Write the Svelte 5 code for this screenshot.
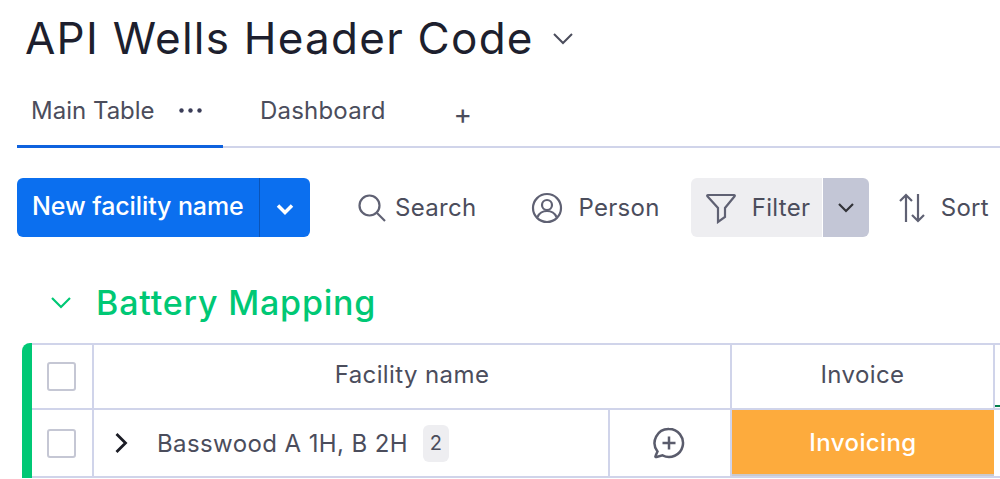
<script>
    const rows = [{ name: "Basswood A 1H, B 2H", count: 2, invoice: "Invoicing" }];
</script>

<main class="board">
    <header class="title-row">
        <h1>API Wells Header Code</h1>
        <svg class="title-caret" width="22" height="13" viewBox="0 0 22 13">
            <path d="M2 2l9 9 9-9" />
        </svg>
    </header>

    <nav class="tabs">
        <div class="tab active">
            <span>Main Table</span>
            <svg width="23" height="5" viewBox="0 0 23 5">
                <circle cx="2.500" cy="2.500" r="2.200" />
                <circle cx="11.500" cy="2.500" r="2.200" />
                <circle cx="20.500" cy="2.500" r="2.200" />
            </svg>
        </div>
        <div class="tab">Dashboard</div>
        <div class="tab-add">+</div>
    </nav>

    <section class="toolbar">
        <div class="new-btn">
            <span class="new-label">New facility name</span>
            <span class="new-caret">
                <svg width="20" height="12" viewBox="0 0 20 12">
                    <path d="M3 2.500l7 7 7-7" />
                </svg>
            </span>
        </div>

        <div class="tool search">
            <svg width="30" height="30" viewBox="0 0 30 30">
                <circle cx="12.500" cy="12.500" r="10" />
                <path d="M20 20l8 8" />
            </svg>
            <span>Search</span>
        </div>

        <div class="tool person">
            <svg width="32" height="32" viewBox="0 0 32 32">
                <circle cx="16" cy="16" r="14" />
                <circle cx="16" cy="13" r="5" />
                <path d="M6.500 25c2-4.500 5.500-6 9.500-6s7.500 1.500 9.500 6" />
            </svg>
            <span>Person</span>
        </div>

        <div class="filter">
            <div class="filter-main">
                <svg width="32" height="32" viewBox="0 0 32 32">
                    <path d="M3 3h26c.8 0 1 .8.6 1.300L20 16v9l-7 5V16L2.400 4.300C2 3.800 2.200 3 3 3z" />
                </svg>
                <span>Filter</span>
            </div>
            <div class="filter-caret">
                <svg width="18" height="11" viewBox="0 0 18 11">
                    <path d="M2 2l7 7 7-7" />
                </svg>
            </div>
        </div>

        <div class="tool sort">
            <svg width="28" height="32" viewBox="0 0 28 32">
                <path d="M8 30V3M2 9l6-6 6 6" />
                <path d="M20 2v27M14 23l6 6 6-6" />
            </svg>
            <span>Sort</span>
        </div>
    </section>

    <div class="group-title">
        <svg width="22" height="13" viewBox="0 0 22 13">
            <path d="M2 2l9 9 9-9" />
        </svg>
        <h2>Battery Mapping</h2>
    </div>

    <section class="table">
        <div class="row head">
            <div class="cell check"><span class="box"></span></div>
            <div class="cell name-head">Facility name</div>
            <div class="cell invoice-head">Invoice</div>
            <div class="cell rest"></div>
        </div>
        {#each rows as row}
            <div class="row body">
                <div class="cell check"><span class="box"></span></div>
                <div class="cell name">
                    <svg width="14" height="22" viewBox="0 0 14 22">
                        <path d="M2.500 2l9 9-9 9" />
                    </svg>
                    <span class="name-text">{row.name}</span>
                    <span class="count">{row.count}</span>
                </div>
                <div class="cell comment">
                    <svg width="32" height="32" viewBox="0 0 32 32">
                        <path d="M16 2a14 14 0 1 1-6.500 26.400L3.500 30c-.8.2-1.300-.4-1-1l2-4.500A14 14 0 0 1 16 2z" />
                        <path d="M16 9.500v13M9.500 16h13" />
                    </svg>
                </div>
                <div class="cell status">{row.invoice}</div>
                <div class="cell rest"></div>
            </div>
        {/each}
    </section>
</main>

<style>
    :global(body) {
        margin: 0;
        background: #fff;
        overflow: hidden;
    }

    .board {
        width: 1000px;
        height: 479px;
        overflow: hidden;
        box-sizing: border-box;
        font-family: "Inter", "Noto Sans", sans-serif;
        color: #4b4d5c;
    }

    svg {
        flex: none;
        display: block;
        fill: none;
        stroke: currentColor;
    }

    /* TITLE */
    .title-row {
        height: 76px;
        padding-left: 25px;
        display: flex;
        align-items: center;
        gap: 18px;
    }

    h1 {
        margin: 0;
        font-size: 44px;
        font-weight: 400;
        letter-spacing: 1.25px;
        color: #1d1f2e;
        white-space: nowrap;
    }

    .title-caret {
        stroke: #4b4d5c;
        stroke-width: 2;
    }

    /* TABS */
    .tabs {
        height: 72px;
        margin-left: 17px;
        box-sizing: border-box;
        border-bottom: 2px solid #d0d4ea;
        display: flex;
        font-size: 24px;
    }

    .tab {
        height: 72px;
        box-sizing: border-box;
        display: flex;
        align-items: center;
        padding: 0 0 4px 14px;
        gap: 24px;
    }

    .tab.active {
        width: 206px;
        padding-bottom: 0;
        border-bottom: 3px solid #0f62de;
    }

    .tab.active svg {
        fill: #3b3d58;
        stroke: none;
    }

    .tab:not(.active) {
        padding-left: 37px;
        letter-spacing: 0.2px;
    }

    .tab-add {
        margin-left: 68px;
        padding-top: 24px;
        font-size: 28px;
        line-height: 1;
    }

    /* TOOLBAR */
    .toolbar {
        margin: 30px 0 0 17px;
        height: 59px;
        display: flex;
        align-items: center;
        font-size: 24px;
        letter-spacing: 0.3px;
        white-space: nowrap;
    }

    .new-btn {
        width: 293px;
        height: 59px;
        display: flex;
        background: #0b6fef;
        border-radius: 6px;
        color: #fff;
        font-weight: 500;
        letter-spacing: 0;
    }

    .new-label {
        width: 243px;
        box-sizing: border-box;
        padding-left: 15px;
        display: flex;
        align-items: center;
        padding-bottom: 3px;
        border-right: 1px solid #0a54b8;
        font-size: 25px;
        letter-spacing: -0.1px;
    }

    .new-caret {
        flex: 1;
        display: flex;
        align-items: center;
        justify-content: center;
        padding-top: 3px;
    }

    .new-caret svg {
        stroke-width: 3.500;
    }

    .tool {
        display: flex;
        align-items: center;
    }

    .tool svg {
        stroke: #5f6173;
        stroke-width: 2.200;
    }

    .search {
        margin-left: 47px;
        gap: 8px;
    }

    .person {
        margin-left: 55px;
        gap: 15px;
    }

    .filter {
        margin-left: 31px;
        width: 178px;
        height: 59px;
        display: flex;
        border-radius: 6px;
        overflow: hidden;
    }

    .filter-main {
        width: 131px;
        background: #eeeef1;
        display: flex;
        align-items: center;
        gap: 15px;
        padding-left: 14px;
        box-sizing: border-box;
    }

    .filter-main svg {
        stroke: #5f6173;
        stroke-width: 2.200;
    }

    .filter-caret {
        flex: 1;
        margin-left: 1px;
        background: #c3c6d6;
        display: flex;
        align-items: center;
        justify-content: center;
        color: #323338;
    }

    .filter-caret svg {
        stroke-width: 2.200;
    }

    .sort {
        margin-left: 29px;
        gap: 15px;
    }

    /* GROUP */
    .group-title {
        margin: 38px 0 0 50px;
        height: 54px;
        display: flex;
        align-items: center;
        gap: 24px;
        color: #00c875;
    }

    .group-title svg {
        stroke-width: 2.200;
    }

    h2 {
        margin: 0;
        font-size: 34px;
        font-weight: 500;
        letter-spacing: 0.8px;
        white-space: nowrap;
    }

    /* TABLE */
    .table {
        margin: 14px 0 0 22px;
        border-left: 10px solid #00c875;
        border-top-left-radius: 8px;
        font-size: 24px;
        letter-spacing: 0.4px;
    }

    .row {
        display: flex;
        border-top: 2px solid #d0d4ea;
    }

    .head {
        height: 63px;
    }

    .body {
        height: 66px;
        border-bottom: 2px solid #d0d4ea;
    }

    .cell {
        box-sizing: border-box;
        display: flex;
        align-items: center;
        justify-content: center;
        border-right: 2px solid #d0d4ea;
    }

    .check {
        width: 62px;
        padding-right: 1px;
    }

    .box {
        width: 29px;
        height: 29px;
        box-sizing: border-box;
        border: 2px solid #c5c7d4;
        border-radius: 3px;
    }

    .name-head {
        width: 638px;
        padding-bottom: 4px;
    }

    .invoice-head {
        width: 263px;
        padding-bottom: 4px;
        position: relative;
    }

    .invoice-head::after {
        content: "";
        position: absolute;
        right: -7px;
        bottom: 1px;
        width: 5px;
        height: 2px;
        background: #037f4c;
    }

    .rest {
        flex: 1;
        border-right: none;
    }

    .name {
        width: 516px;
        justify-content: flex-start;
        padding-left: 20px;
        color: #4b4d5c;
    }

    .name svg {
        stroke: #1b1c25;
        stroke-width: 2.800;
    }

    .name-text {
        margin-left: 29px;
    }

    .count {
        margin-left: 15px;
        width: 26px;
        height: 37px;
        border-radius: 6px;
        background: #eeeef1;
        display: flex;
        align-items: center;
        justify-content: center;
        font-size: 20px;
    }

    .comment {
        width: 122px;
        padding-right: 2px;
    }

    .comment svg {
        stroke: #5a5c6c;
        stroke-width: 2.500;
    }

    .status {
        width: 262px;
        background: #fdab3d;
        color: #fff;
        font-weight: 500;
        padding-bottom: 2px;
        box-shadow: inset 0 -2px 0 #c9c9cf;
        border-right: none;
    }
</style>
